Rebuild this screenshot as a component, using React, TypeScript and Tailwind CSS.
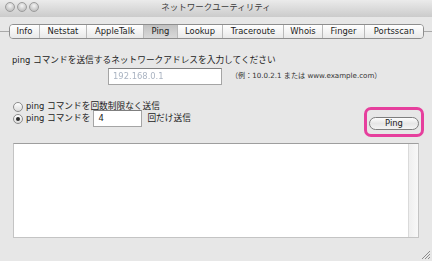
import React from 'react'

const tabs = [
  { label: 'Info', w: 'w-[29px]' },
  { label: 'Netstat', w: 'w-[47px]' },
  { label: 'AppleTalk', w: 'w-[57px]' },
  { label: 'Ping', w: 'w-[34px]', active: true },
  { label: 'Lookup', w: 'w-[45px]' },
  { label: 'Traceroute', w: 'w-[61px]' },
  { label: 'Whois', w: 'w-[39px]' },
  { label: 'Finger', w: 'w-[42px]' },
  { label: 'Portsscan', w: 'w-[59px]' },
]

// Japanese runs are drawn a bit smaller than the Latin text around them
const J = ({ children }: { children: React.ReactNode }) => (
  <span className="text-[8.7px]">{children}</span>
)

const Light = () => (
  <div className="w-[10px] h-[10px] rounded-full border border-[#9c9c9c] bg-[radial-gradient(circle_at_50%_35%,#f4f4f4,#c4c4c4_70%)]" />
)

const Radio = ({ checked }: { checked?: boolean }) => (
  <div className="w-[10px] h-[10px] rounded-full border border-[#8c8c8c] bg-gradient-to-b from-[#ffffff] to-[#dcdcdc] flex items-center justify-center shrink-0">
    {checked && <div className="w-[4px] h-[4px] rounded-full bg-[#2a2a2a]" />}
  </div>
)

const App = () => (
  <div className="w-[432px] h-[261px] overflow-hidden bg-[#e7e7e7] flex flex-col font-['DejaVu_Sans','Noto_Sans_CJK_JP',sans-serif] text-[8.4px] text-[#1b1b1b]">
    {/* title bar */}
    <div className="h-[17px] shrink-0 grid grid-cols-[1fr_auto_1fr] items-start bg-gradient-to-b from-[#ebebeb] to-[#cbcbcb]">
      <div className="flex gap-[2px] pl-[5px] pt-[2px]">
        <Light />
        <Light />
        <Light />
      </div>
      <div className="pt-[1px] text-[8.5px] leading-[12px] text-[#3c3c3c]">ネットワークユーティリティ</div>
      <div />
    </div>

    {/* tabs */}
    <div className="mt-[7px] h-[15px] flex items-center shrink-0">
      <div className="w-[9px] h-px bg-[#a9a9a9]" />
      <div className="flex h-[15px] rounded-[4px] border border-[#8e8e8e] overflow-hidden">
        {tabs.map((t, i) => (
          <div
            key={t.label}
            className={`${t.w} flex items-center justify-center leading-none ${i > 0 ? 'border-l border-[#b9b9b9]' : ''} ${
              t.active ? 'bg-gradient-to-b from-[#c2c2c2] to-[#d9d9d9]' : 'bg-gradient-to-b from-[#ffffff] to-[#e9e9e9]'
            }`}
          >
            {t.label}
          </div>
        ))}
      </div>
      <div className="flex-1 h-px bg-[#a9a9a9]" />
    </div>

    {/* content */}
    <div className="pl-[12px] pr-[8px] flex flex-col shrink-0">
      <div className="mt-[15px] h-[12px] leading-[12px] whitespace-nowrap">
        ping <J>コマンドを送信するネットワークアドレスを入力してください</J>
      </div>

      <div className="mt-[2px] h-[17px] flex items-center">
        <div className="ml-[96px] w-[114px] h-[17px] bg-white border border-[#a5a5a5] border-t-[#7f7f7f] flex items-center pl-[4px]">
          <span className="text-[#aab4c2] blur-[0.4px]">192.168.0.1</span>
        </div>
        <div className="ml-[9px] text-[7.1px] text-[#333] whitespace-nowrap">
          （例：10.0.2.1 または www.example.com）
        </div>
      </div>

      <div className="mt-[16px] flex justify-between">
        <div className="flex flex-col">
          <div className="h-[12px] flex items-center gap-[3px] ml-[1px] whitespace-nowrap">
            <Radio />
            <span>
              ping <J>コマンドを回数制限なく送信</J>
            </span>
          </div>
          <div className="-mt-[3px] h-[17px] flex items-center ml-[1px] whitespace-nowrap">
            <Radio checked />
            <span className="ml-[3px]">
              ping <J>コマンドを</J>
            </span>
            <div className="ml-[3px] w-[49px] h-[17px] bg-white border border-[#a5a5a5] border-t-[#7f7f7f] flex items-center pl-[4px]">
              4
            </div>
            <span className="ml-[5px]">
              <J>回だけ送信</J>
            </span>
          </div>
        </div>

        <div className="mt-[6px] w-[60px] h-[30px] border-[3px] border-[#e63f9d] rounded-[7px] flex justify-center pt-[7px]">
          <div className="w-[50px] h-[13px] rounded-full border border-[#7e7e7e] bg-gradient-to-b from-[#fdfdfd] via-[#e6e6e6] to-[#f4f4f4] flex items-center justify-center leading-none">
            Ping
          </div>
        </div>
      </div>

      <div className="mt-[6px] ml-[1px] w-[406px] h-[95px] bg-white border border-[#c4c4c4] border-t-[#9e9e9e] flex">
        <div className="flex-1" />
        <div className="w-[10px] bg-gradient-to-r from-[#efefef] to-[#f8f8f8] border-l border-[#dadada]" />
      </div>
    </div>

    {/* resize grip */}
    <div className="flex-1 flex justify-end items-end pr-[1px] pb-[1px]">
      <svg width="11" height="11" viewBox="0 0 11 11">
        <path d="M10 2 L2 10 M10 5 L5 10 M10 8 L8 10" stroke="#8d8d8d" strokeWidth="1" />
      </svg>
    </div>
  </div>
)

export default App
